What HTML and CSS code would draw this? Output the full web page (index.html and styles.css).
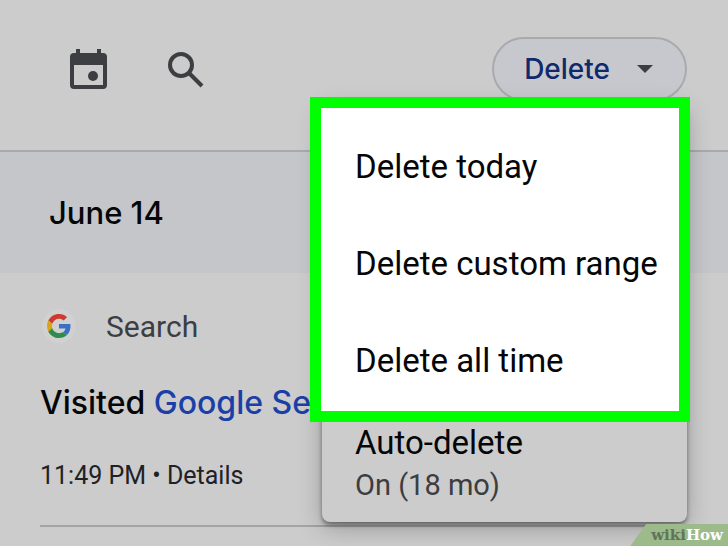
FILE: index.html
```html
<!DOCTYPE html>
<html lang="en">
<head>
    <meta charset="UTF-8">
    <meta name="viewport" content="width=device-width, initial-scale=1.0">
    <title>My Activity</title>
    <link rel="stylesheet" href="styles.css">
</head>
<body>
    <header class="toolbar">
        <button type="button" class="icon-button" aria-label="Filter by date">
            <svg width="37" height="40" viewBox="0 0 37 40">
                <path fill="#3c3e41" fill-rule="evenodd" d="M6 0h4v4h17V0h4v4h2a4 4 0 0 1 4 4v28a4 4 0 0 1-4 4H4a4 4 0 0 1-4-4V8a4 4 0 0 1 4-4h2zM4 16v20h29V16z"/>
                <circle cx="23" cy="27" r="5" fill="#3c3e41"/>
            </svg>
        </button>
        <button type="button" class="icon-button" aria-label="Search activity">
            <svg width="38" height="38" viewBox="0 0 38 38" fill="none" stroke="#3c3e41" stroke-width="4">
                <circle cx="14" cy="15" r="11"/>
                <path d="M22 23l13 13"/>
            </svg>
        </button>

        <div class="delete-control">
            <button type="button" class="delete-button" aria-haspopup="menu" aria-expanded="true">
                Delete
                <svg width="16" height="8" viewBox="0 0 16 8"><path fill="#3c3e41" d="M0 0h16L8 8z"/></svg>
            </button>

            <div class="menu" role="menu">
                <div class="menu-group highlighted">
                    <button type="button" class="menu-item" role="menuitem">Delete today</button>
                    <button type="button" class="menu-item" role="menuitem">Delete custom range</button>
                    <button type="button" class="menu-item" role="menuitem">Delete all time</button>
                </div>
                <button type="button" class="menu-item auto-delete" role="menuitem">
                    Auto-delete
                    <span class="menu-note">On (18 mo)</span>
                </button>
            </div>
        </div>
    </header>

    <main>
        <h2 class="date-heading">June 14</h2>

        <article class="activity">
            <div class="source">
                <span class="source-icon">
                    <svg width="24" height="24" viewBox="0 0 48 48">
                        <path fill="#cf3a2e" d="M24 9.500c3.540 0 6.710 1.220 9.210 3.600l6.850-6.850C35.900 2.380 30.470 0 24 0 14.620 0 6.510 5.380 2.560 13.220l7.980 6.190C12.430 13.720 17.740 9.500 24 9.500z"/>
                        <path fill="#3a70c4" d="M46.980 24.550c0-1.570-.150-3.090-.380-4.550H24v9.020h12.940c-.580 2.960-2.260 5.480-4.780 7.180l7.730 6c4.510-4.180 7.090-10.360 7.090-17.650z"/>
                        <path fill="#d9a316" d="M10.530 28.590c-.480-1.450-.760-2.990-.760-4.590s.270-3.140.760-4.590l-7.980-6.190C.920 16.460 0 20.120 0 24c0 3.880.920 7.540 2.560 10.780z"/>
                        <path fill="#2f8c4a" d="M24 48c6.480 0 11.930-2.130 15.890-5.810l-7.730-6c-2.150 1.450-4.920 2.300-8.160 2.300-6.260 0-11.570-4.220-13.470-9.910l-7.980 6.190C6.510 42.620 14.620 48 24 48z"/>
                    </svg>
                </span>
                <span class="source-name">Search</span>
            </div>
            <h3 class="title">Visited <a href="#search">Google Search</a></h3>
            <p class="meta">11:49 PM • <a href="#details">Details</a></p>
        </article>
    </main>

    <div class="watermark"><span class="watermark-wiki">wiki</span>How</div>
</body>
</html>
```
FILE: styles.css
```css
* {
    margin: 0;
    padding: 0;
    box-sizing: border-box;
}

body {
    min-height: 100vh;
    overflow: hidden;
    background: #cccccc;
    color: #050608;
    font-family: Roboto, sans-serif;
}

button {
    border: none;
    background: none;
    color: inherit;
    font: inherit;
    cursor: pointer;
}

a {
    color: inherit;
    text-decoration: none;
}

svg {
    display: block;
}

/* Top bar */
.toolbar {
    display: flex;
    align-items: center;
    gap: 60px;
    height: 152px;
    padding: 0 41px 12px 70px;
    border-bottom: 2px solid #a9aaac;
}

.delete-control {
    position: relative;
    margin-left: auto;
}

.delete-button {
    display: flex;
    align-items: center;
    gap: 27px;
    height: 64px;
    padding: 0 32px 0 30px;
    border: 2px solid #a8aaae;
    border-radius: 32px;
    background: #c7c8cd;
    color: #10296b;
    font-family: Inter, sans-serif;
    font-size: 28px;
    font-weight: 500;
}

/* Drop-down menu */
.menu {
    position: absolute;
    top: 67px;
    right: 0;
    z-index: 1;
    width: 365px;
    padding: 14px 0 15px;
    border-radius: 8px;
    background: #cccccc;
    box-shadow: 0 3px 4px rgba(0, 0, 0, 0.4), 0 6px 24px rgba(0, 0, 0, 0.25);
}

.menu-group {
    position: relative;
}

.highlighted::before {
    content: "";
    position: absolute;
    inset: -21px -3px -13px -12px;
    border: 11px solid #00ff00;
    background: #ffffff;
}

.menu-item {
    position: relative;
    display: block;
    width: 100%;
    height: 97px;
    padding: 0 33px;
    font-size: 33px;
    text-align: left;
    white-space: nowrap;
}

.auto-delete {
    height: auto;
    padding-top: 14px;
    line-height: 40px;
}

.menu-note {
    display: block;
    color: #3c3d3f;
    font-size: 29px;
    line-height: 44px;
}

/* Activity list */
.date-heading {
    padding: 0 49px;
    background: #c5c6c9;
    font-family: Inter, sans-serif;
    font-size: 31px;
    font-weight: 500;
    line-height: 121px;
}

.activity {
    margin-left: 40px;
    padding: 35px 0 33px;
    border-bottom: 2px solid #a3a4a5;
}

.source {
    display: flex;
    align-items: center;
    gap: 30px;
    padding-left: 2px;
    height: 36px;
}

.source-icon {
    display: grid;
    place-items: center;
    width: 34px;
    height: 34px;
    border-radius: 50%;
    background: #d1d1d1;
}

.source-name {
    color: #3c3e41;
    font-size: 30px;
}

.title {
    margin-top: 37px;
    font-family: Inter, sans-serif;
    font-size: 32px;
    font-weight: 500;
    line-height: 44px;
    white-space: nowrap;
}

.title a {
    color: #1b3fa6;
}

.meta {
    margin-top: 35px;
    color: #202124;
    font-size: 25px;
    line-height: 32px;
}

/* Corner badge */
.watermark {
    position: fixed;
    right: 0;
    bottom: 0;
    z-index: 2;
    padding: 0 5px 0 21px;
    background: #9dba8a;
    clip-path: polygon(16px 0, 100% 0, 100% 100%, 0 100%);
    color: #ffffff;
    font-family: "DejaVu Serif", serif;
    font-size: 15px;
    font-weight: bold;
    line-height: 22px;
}

.watermark-wiki {
    color: #61745a;
}
```
